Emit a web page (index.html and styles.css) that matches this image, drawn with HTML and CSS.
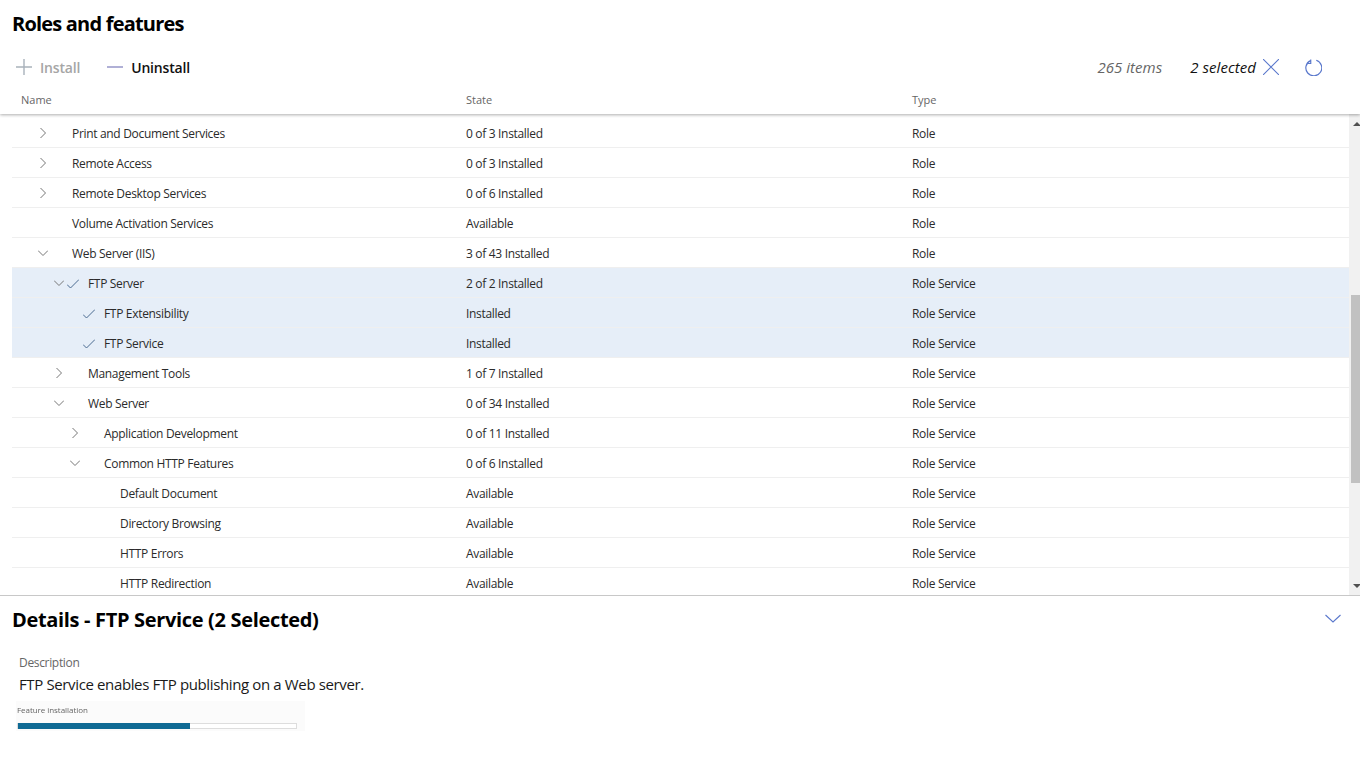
FILE: index.html
```html
<!DOCTYPE html>
<html lang="en">
<head>
<meta charset="utf-8">
<title>Roles and features</title>
<link rel="stylesheet" href="styles.css">
</head>
<body>
<div class="app">
  <header class="page-head">
    <h1 class="title">Roles and features</h1>
    <div class="toolbar">
      <button class="tool tool-off">
        <svg class="tool-icon" viewBox="0 0 16 16"><path d="M8 0v16M0 8h16" class="stroke-grey"/></svg>
        <span>Install</span>
      </button>
      <button class="tool">
        <svg class="tool-icon" viewBox="0 0 16 16"><path d="M0 8h16" class="stroke-purple"/></svg>
        <span>Uninstall</span>
      </button>
      <div class="tool-right">
        <span class="count">265 items</span>
        <span class="selected">2 selected</span>
        <svg class="clear-icon" viewBox="0 0 16 16"><path d="M0 0l16 16M16 0L0 16" class="stroke-blue"/></svg>
        <svg class="refresh-icon" viewBox="0 0 16 16"><path d="M5.2 1.3A7.5 7.5 0 1 0 10.6 1M5.4 .2v3.8H1.6" class="stroke-blue" transform="translate(0 .2)"/></svg>
      </div>
    </div>
    <div class="cols">
      <span class="col-name">Name</span>
      <span class="col-state">State</span>
      <span class="col-type">Type</span>
    </div>
  </header>
  <section class="table">
    <div class="rows">
      <div class="row"><div class="name i0"><svg class="chev" viewBox="0 0 10 10"><path d="M2.5 0l5 5-5 5"/></svg><span class="nm">Print and Document Services</span></div><div class="state">0 of 3 Installed</div><div class="type">Role</div></div>
      <div class="row"><div class="name i0"><svg class="chev" viewBox="0 0 10 10"><path d="M2.5 0l5 5-5 5"/></svg><span class="nm">Remote Access</span></div><div class="state">0 of 3 Installed</div><div class="type">Role</div></div>
      <div class="row"><div class="name i0"><svg class="chev" viewBox="0 0 10 10"><path d="M2.5 0l5 5-5 5"/></svg><span class="nm">Remote Desktop Services</span></div><div class="state">0 of 6 Installed</div><div class="type">Role</div></div>
      <div class="row"><div class="name i0"><span class="nochev"></span><span class="nm">Volume Activation Services</span></div><div class="state">Available</div><div class="type">Role</div></div>
      <div class="row"><div class="name i0"><svg class="chev" viewBox="0 0 10 10"><path d="M0 2.5l5 5 5-5"/></svg><span class="nm">Web Server (IIS)</span></div><div class="state">3 of 43 Installed</div><div class="type">Role</div></div>
      <div class="row sel"><div class="name i1"><svg class="chev" viewBox="0 0 10 10"><path d="M0 2.5l5 5 5-5"/></svg><span class="nm">FTP Server</span><svg class="check" viewBox="0 0 12 10"><path d="M0 5.5l3.5 3.5L12 .5"/></svg></div><div class="state">2 of 2 Installed</div><div class="type">Role Service</div></div>
      <div class="row sel"><div class="name i2"><span class="nochev"></span><span class="nm">FTP Extensibility</span><svg class="check" viewBox="0 0 12 10"><path d="M0 5.5l3.5 3.5L12 .5"/></svg></div><div class="state">Installed</div><div class="type">Role Service</div></div>
      <div class="row sel"><div class="name i2"><span class="nochev"></span><span class="nm">FTP Service</span><svg class="check" viewBox="0 0 12 10"><path d="M0 5.5l3.5 3.5L12 .5"/></svg></div><div class="state">Installed</div><div class="type">Role Service</div></div>
      <div class="row"><div class="name i1"><svg class="chev" viewBox="0 0 10 10"><path d="M2.5 0l5 5-5 5"/></svg><span class="nm">Management Tools</span></div><div class="state">1 of 7 Installed</div><div class="type">Role Service</div></div>
      <div class="row"><div class="name i1"><svg class="chev" viewBox="0 0 10 10"><path d="M0 2.5l5 5 5-5"/></svg><span class="nm">Web Server</span></div><div class="state">0 of 34 Installed</div><div class="type">Role Service</div></div>
      <div class="row"><div class="name i2"><svg class="chev" viewBox="0 0 10 10"><path d="M2.5 0l5 5-5 5"/></svg><span class="nm">Application Development</span></div><div class="state">0 of 11 Installed</div><div class="type">Role Service</div></div>
      <div class="row"><div class="name i2"><svg class="chev" viewBox="0 0 10 10"><path d="M0 2.5l5 5 5-5"/></svg><span class="nm">Common HTTP Features</span></div><div class="state">0 of 6 Installed</div><div class="type">Role Service</div></div>
      <div class="row"><div class="name i3"><span class="nochev"></span><span class="nm">Default Document</span></div><div class="state">Available</div><div class="type">Role Service</div></div>
      <div class="row"><div class="name i3"><span class="nochev"></span><span class="nm">Directory Browsing</span></div><div class="state">Available</div><div class="type">Role Service</div></div>
      <div class="row"><div class="name i3"><span class="nochev"></span><span class="nm">HTTP Errors</span></div><div class="state">Available</div><div class="type">Role Service</div></div>
      <div class="row"><div class="name i3"><span class="nochev"></span><span class="nm">HTTP Redirection</span></div><div class="state">Available</div><div class="type">Role Service</div></div>
    </div>
    <div class="scrollbar">
      <span class="arrow-up"></span>
      <span class="thumb"></span>
      <span class="arrow-down"></span>
    </div>
  </section>
  <section class="details">
    <div class="details-head">
      <h2 class="details-title">Details - FTP Service (2 Selected)</h2>
      <svg class="details-chev" viewBox="0 0 16 9"><path d="M.5 1L8 8l7.5-7"/></svg>
    </div>
    <div class="desc-label">Description</div>
    <div class="desc-text">FTP Service enables FTP publishing on a Web server.</div>
    <div class="progress-shot">
      <div class="shot-label">Feature installation</div>
      <div class="shot-bar"><div class="shot-fill"></div></div>
    </div>
  </section>
</div>
</body>
</html>
```
FILE: styles.css
```css
* { box-sizing: border-box; }
html, body { margin: 0; padding: 0; background: #fff; }
body { width: 1360px; height: 778px; overflow: hidden; font-family: "Open Sans", "Noto Sans", sans-serif; color: #1a1a1a; }
.app { display: flex; flex-direction: column; height: 778px; }
.page-head { height: 114px; box-shadow: 0 1px 3px rgba(0,0,0,.32); position: relative; z-index: 1; background: #fff; padding-top: 10px; }
.title { margin: 0 0 0 12px; font-size: 20px; line-height: 27px; font-weight: 700; color: #000; letter-spacing: -.8px; }
.toolbar { display: flex; align-items: center; height: 24px; margin-top: 18px; padding-left: 16px; }
.tool { display: flex; align-items: center; gap: 8px; border: 0; background: none; padding: 0; margin-right: 27px; font: 600 14px "Open Sans", sans-serif; letter-spacing: -.18px; color: #111; }
.tool-off { color: #a6a6a6; }
.tool-icon { width: 16px; height: 16px; fill: none; }
.stroke-grey { stroke: #a9b2bb; stroke-width: 1.4; }
.stroke-purple { stroke: #8f8fc4; stroke-width: 1.4; }
.stroke-blue { stroke: #5a78cc; stroke-width: 1.1; fill: none; }
.tool-right { margin-left: auto; display: flex; align-items: center; padding-right: 38px; font-size: 15px; font-style: italic; letter-spacing: .05px; }
.count { color: #666; margin-right: 28px; }
.selected { color: #111; margin-right: 7px; }
.clear-icon { width: 16px; height: 16px; margin-right: 26px; }
.refresh-icon { width: 17px; height: 17px; }
.cols { display: flex; height: 24px; align-items: center; margin-top: 8px; font-size: 11px; color: #666; }
.col-name { margin-left: 21px; width: 445px; }
.col-state { width: 446px; }
.table { display: flex; height: 482px; padding-top: 4px; border-bottom: 1px solid #c8c8c8; }
.rows { width: 1337px; margin-left: 12px; overflow: hidden; }
.row { display: flex; align-items: center; height: 30px; padding-top: 2px; border-bottom: 1px solid #efefef; font-size: 12px; line-height: 16px; letter-spacing: -.32px; color: #2b2b2b; }
.row.sel { background: #e6eef8; }
.name { width: 454px; display: flex; align-items: center; position: relative; }
.i0 { padding-left: 26px; }
.i1 { padding-left: 42px; }
.i2 { padding-left: 58px; }
.i3 { padding-left: 74px; }
.chev { width: 10px; height: 10px; fill: none; stroke: #777; stroke-width: 1; flex: none; margin-top: -2px; }
.nochev { width: 10px; height: 10px; flex: none; }
.nm { margin-left: 24px; }
.check { position: absolute; width: 12px; height: 10px; fill: none; stroke: #4a6a90; stroke-width: 1; }
.i1 .check { left: 55px; }
.i2 .check { left: 71px; }
.state { width: 446px; }
.type { flex: 1; }
.scrollbar { width: 11px; background: #f1f1f1; position: relative; overflow: hidden; margin-top: -4px; }
.thumb { position: absolute; left: 2px; right: 0; top: 181px; height: 188px; background: #c1c1c1; }
.arrow-up, .arrow-down { position: absolute; left: 4px; width: 0; height: 0; border-left: 4px solid transparent; border-right: 4px solid transparent; }
.arrow-up { top: 8px; border-bottom: 4px solid #505050; }
.arrow-down { bottom: 7px; border-top: 4px solid #505050; }
.details { flex: 1; }
.details-head { display: flex; align-items: center; justify-content: space-between; padding: 6px 19px 0 12px; height: 41px; }
.details-title { margin: 0; font-size: 20px; font-weight: 700; color: #000; letter-spacing: -.33px; line-height: 28px; }
.details-chev { width: 16px; height: 9px; fill: none; stroke: #5a78cc; stroke-width: 1.1; margin-top: -2px; }
.desc-label { margin: 18px 0 0 19px; font-size: 12px; line-height: 16px; color: #666; letter-spacing: -.33px; }
.desc-text { margin: 3px 0 0 19px; font-size: 15px; line-height: 20px; color: #1a1a1a; letter-spacing: -.37px; }
.progress-shot { margin: 7px 0 0 16px; width: 289px; height: 30px; background: #fbfbfb; padding: 3px 0 0 1px; filter: blur(.35px); }
.shot-label { font-size: 8px; line-height: 11px; color: #666; letter-spacing: -.05px; }
.shot-bar { margin-top: 8px; width: 280px; height: 6px; border: 1px solid #ddd; background: #fff; }
.shot-fill { width: 62%; height: 6px; background: #0f6a94; margin-top: -1px; }
```
